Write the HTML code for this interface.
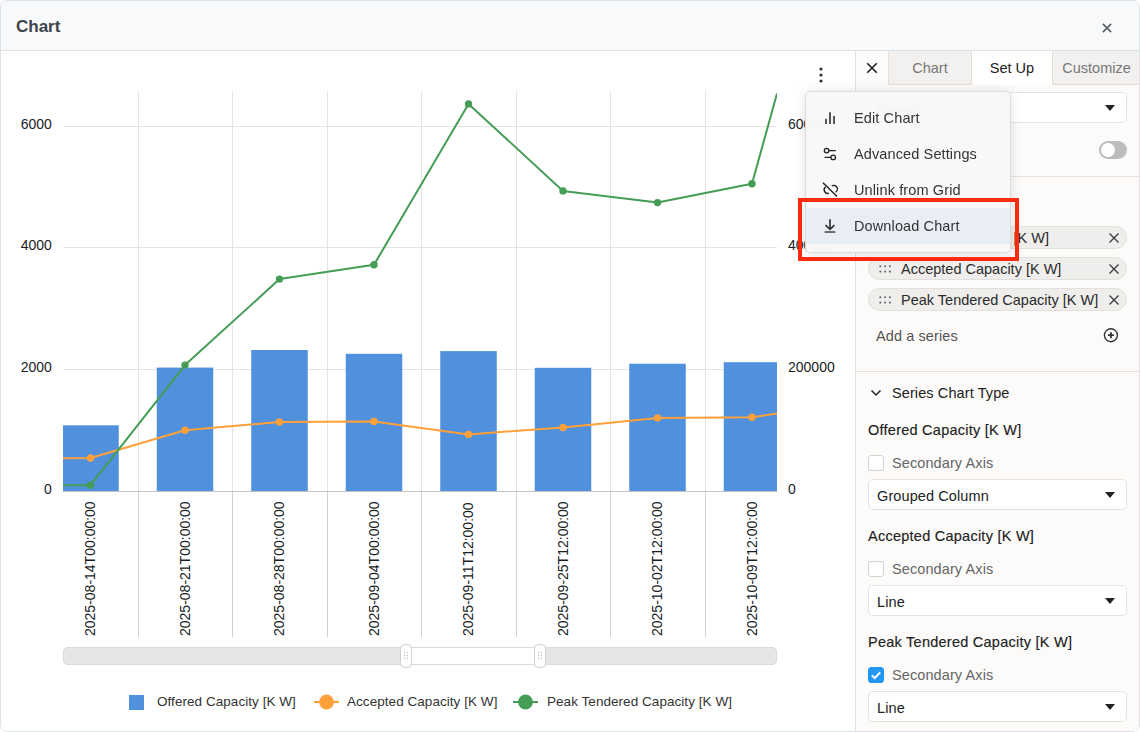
<!DOCTYPE html>
<html><head><meta charset="utf-8">
<style>
*{box-sizing:border-box;margin:0;padding:0}
html,body{width:1140px;height:732px;overflow:hidden;background:#fff;font-family:"Liberation Sans",sans-serif}
.win{position:absolute;left:0;top:0;width:1140px;height:732px;border-radius:7px;overflow:hidden;background:#fff}
.frame{position:absolute;left:0;top:0;width:1140px;height:732px;border:1px solid #dde1e5;border-radius:7px}
.hdr{position:absolute;left:0;top:0;width:1140px;height:51px;background:#f8f9fa;border-bottom:1px solid #dde1e5}
.title{position:absolute;left:16px;top:17px;font-size:17px;font-weight:bold;color:#3d434a;line-height:20px}
.abs{position:absolute}
.panel{position:absolute;left:855px;top:51px;width:285px;height:681px;background:#fcfbfa}
.t{position:absolute;font-size:14.5px;letter-spacing:0.1px;line-height:18px;white-space:nowrap;color:#222}
.tab{position:absolute;top:0;height:34px;border-bottom:1px solid #e4dcd5;font-size:14.5px;letter-spacing:0;line-height:34px;text-align:center;color:#777;background:#f2f1ef}
.chip{position:absolute;left:12px;width:259px;height:23px;border:1px solid #e2e0dd;border-radius:12px;background:#efeeec}
.sel{position:absolute;left:12px;width:259px;height:31px;border:1px solid #e6e2de;border-radius:5px;background:#fff}
.cb{position:absolute;left:12px;width:16px;height:16px;border:1px solid #d4d2cf;border-radius:3px;background:#fff}
.menu{position:absolute;left:805px;top:91px;width:206px;height:162px;background:rgba(248,248,248,0.965);backdrop-filter:blur(1.5px);border:1px solid #dcdcdc;border-radius:5px;box-shadow:0 1px 12px rgba(0,0,0,0.13)}
.mi{position:absolute;left:0;width:204px;height:36px}
.mt{position:absolute;left:48px;top:9px;font-size:14.5px;letter-spacing:0.12px;line-height:18px;color:#333;white-space:nowrap}
</style></head><body>
<div class="win">
<div class="hdr"><div class="title">Chart</div>
  <svg class="abs" style="left:1101px;top:22px" width="12" height="12" viewBox="0 0 12 12"><path d="M1.9 1.9L10.1 10.1M10.1 1.9L1.9 10.1" stroke="#5f666d" stroke-width="1.8"/></svg>
</div>
<svg class="abs" style="left:0;top:0" width="855" height="732" viewBox="0 0 855 732">
<defs><clipPath id="pc"><rect x="63" y="80" width="714" height="412"/></clipPath></defs>
<line x1="63" x2="777" y1="126.5" y2="126.5" stroke="#e4e4e4" stroke-width="1"/>
<line x1="63" x2="777" y1="247.5" y2="247.5" stroke="#e4e4e4" stroke-width="1"/>
<line x1="63" x2="777" y1="369.5" y2="369.5" stroke="#e4e4e4" stroke-width="1"/>
<line x1="138.5" x2="138.5" y1="91" y2="491" stroke="#e4e4e4" stroke-width="1"/>
<line x1="138.5" x2="138.5" y1="492" y2="637" stroke="#cfcfcf" stroke-width="1"/>
<line x1="232.5" x2="232.5" y1="91" y2="491" stroke="#e4e4e4" stroke-width="1"/>
<line x1="232.5" x2="232.5" y1="492" y2="637" stroke="#cfcfcf" stroke-width="1"/>
<line x1="327.5" x2="327.5" y1="91" y2="491" stroke="#e4e4e4" stroke-width="1"/>
<line x1="327.5" x2="327.5" y1="492" y2="637" stroke="#cfcfcf" stroke-width="1"/>
<line x1="421.5" x2="421.5" y1="91" y2="491" stroke="#e4e4e4" stroke-width="1"/>
<line x1="421.5" x2="421.5" y1="492" y2="637" stroke="#cfcfcf" stroke-width="1"/>
<line x1="516.5" x2="516.5" y1="91" y2="491" stroke="#e4e4e4" stroke-width="1"/>
<line x1="516.5" x2="516.5" y1="492" y2="637" stroke="#cfcfcf" stroke-width="1"/>
<line x1="610.5" x2="610.5" y1="91" y2="491" stroke="#e4e4e4" stroke-width="1"/>
<line x1="610.5" x2="610.5" y1="492" y2="637" stroke="#cfcfcf" stroke-width="1"/>
<line x1="705.5" x2="705.5" y1="91" y2="491" stroke="#e4e4e4" stroke-width="1"/>
<line x1="705.5" x2="705.5" y1="492" y2="637" stroke="#cfcfcf" stroke-width="1"/>
<g clip-path="url(#pc)">
<rect x="62.25" y="425.3" width="56.5" height="65.70" fill="#5090dc"/>
<rect x="156.75" y="367.6" width="56.5" height="123.40" fill="#5090dc"/>
<rect x="251.25" y="350.0" width="56.5" height="141.00" fill="#5090dc"/>
<rect x="345.75" y="353.8" width="56.5" height="137.20" fill="#5090dc"/>
<rect x="440.25" y="351.1" width="56.5" height="139.90" fill="#5090dc"/>
<rect x="534.75" y="367.8" width="56.5" height="123.20" fill="#5090dc"/>
<rect x="629.25" y="363.7" width="56.5" height="127.30" fill="#5090dc"/>
<rect x="723.75" y="362.2" width="56.5" height="128.80" fill="#5090dc"/>
</g>
<line x1="63" x2="777" y1="491.5" y2="491.5" stroke="#c3c3c3" stroke-width="1"/>
<g clip-path="url(#pc)">
<polyline points="63.00,458.30 90.50,458.00 185.00,430.20 279.50,421.90 374.00,421.40 468.50,434.40 563.00,427.50 657.50,417.90 752.00,417.20 777.00,413.50" fill="none" stroke="#ffa03a" stroke-width="2" stroke-linejoin="round"/><circle cx="90.50" cy="458.00" r="3.7" fill="#ffa03a"/><circle cx="185.00" cy="430.20" r="3.7" fill="#ffa03a"/><circle cx="279.50" cy="421.90" r="3.7" fill="#ffa03a"/><circle cx="374.00" cy="421.40" r="3.7" fill="#ffa03a"/><circle cx="468.50" cy="434.40" r="3.7" fill="#ffa03a"/><circle cx="563.00" cy="427.50" r="3.7" fill="#ffa03a"/><circle cx="657.50" cy="417.90" r="3.7" fill="#ffa03a"/><circle cx="752.00" cy="417.20" r="3.7" fill="#ffa03a"/>
<polyline points="63.00,485.20 90.50,485.20 185.00,365.10 279.50,279.10 374.00,264.80 468.50,103.90 563.00,190.90 657.50,202.60 752.00,183.80 777.00,93.40" fill="none" stroke="#459d55" stroke-width="2" stroke-linejoin="round"/><circle cx="90.50" cy="485.20" r="3.7" fill="#459d55"/><circle cx="185.00" cy="365.10" r="3.7" fill="#459d55"/><circle cx="279.50" cy="279.10" r="3.7" fill="#459d55"/><circle cx="374.00" cy="264.80" r="3.7" fill="#459d55"/><circle cx="468.50" cy="103.90" r="3.7" fill="#459d55"/><circle cx="563.00" cy="190.90" r="3.7" fill="#459d55"/><circle cx="657.50" cy="202.60" r="3.7" fill="#459d55"/><circle cx="752.00" cy="183.80" r="3.7" fill="#459d55"/>
</g>
<text x="51.8" y="129.3" text-anchor="end" font-family="Liberation Sans" font-size="14" fill="#181d1f">6000</text>
<text x="51.8" y="250.3" text-anchor="end" font-family="Liberation Sans" font-size="14" fill="#181d1f">4000</text>
<text x="51.8" y="372.3" text-anchor="end" font-family="Liberation Sans" font-size="14" fill="#181d1f">2000</text>
<text x="51.8" y="494.3" text-anchor="end" font-family="Liberation Sans" font-size="14" fill="#181d1f">0</text>
<text x="788" y="129.3" font-family="Liberation Sans" font-size="14" fill="#181d1f">600000</text>
<text x="788" y="250.3" font-family="Liberation Sans" font-size="14" fill="#181d1f">400000</text>
<text x="788" y="372.3" font-family="Liberation Sans" font-size="14" fill="#181d1f">200000</text>
<text x="788" y="494.3" font-family="Liberation Sans" font-size="14" fill="#181d1f">0</text>
<text transform="translate(95.10,636) rotate(-90)" font-family="Liberation Sans" font-size="14" letter-spacing="0" fill="#181d1f">2025-08-14T00:00:00</text>
<text transform="translate(189.60,636) rotate(-90)" font-family="Liberation Sans" font-size="14" letter-spacing="0" fill="#181d1f">2025-08-21T00:00:00</text>
<text transform="translate(284.10,636) rotate(-90)" font-family="Liberation Sans" font-size="14" letter-spacing="0" fill="#181d1f">2025-08-28T00:00:00</text>
<text transform="translate(378.60,636) rotate(-90)" font-family="Liberation Sans" font-size="14" letter-spacing="0" fill="#181d1f">2025-09-04T00:00:00</text>
<text transform="translate(473.10,636) rotate(-90)" font-family="Liberation Sans" font-size="14" letter-spacing="0" fill="#181d1f">2025-09-11T12:00:00</text>
<text transform="translate(567.60,636) rotate(-90)" font-family="Liberation Sans" font-size="14" letter-spacing="0" fill="#181d1f">2025-09-25T12:00:00</text>
<text transform="translate(662.10,636) rotate(-90)" font-family="Liberation Sans" font-size="14" letter-spacing="0" fill="#181d1f">2025-10-02T12:00:00</text>
<text transform="translate(756.60,636) rotate(-90)" font-family="Liberation Sans" font-size="14" letter-spacing="0" fill="#181d1f">2025-10-09T12:00:00</text>
<rect x="63.5" y="647.5" width="713" height="17" rx="4" fill="#e6e6e6" stroke="#d9d9d9" stroke-width="1"/>
<rect x="406" y="647.5" width="134" height="17" fill="#fff" stroke="#d9d9d9" stroke-width="1"/>
<rect x="400.5" y="644.5" width="11" height="23" rx="4" fill="#fff" stroke="#cfcfcf" stroke-width="1"/>
<circle cx="404.5" cy="652.5" r="0.7" fill="#bbb"/>
<circle cx="407.5" cy="652.5" r="0.7" fill="#bbb"/>
<circle cx="404.5" cy="655.5" r="0.7" fill="#bbb"/>
<circle cx="407.5" cy="655.5" r="0.7" fill="#bbb"/>
<circle cx="404.5" cy="658.5" r="0.7" fill="#bbb"/>
<circle cx="407.5" cy="658.5" r="0.7" fill="#bbb"/>
<rect x="534.5" y="644.5" width="11" height="23" rx="4" fill="#fff" stroke="#cfcfcf" stroke-width="1"/>
<circle cx="538.5" cy="652.5" r="0.7" fill="#bbb"/>
<circle cx="541.5" cy="652.5" r="0.7" fill="#bbb"/>
<circle cx="538.5" cy="655.5" r="0.7" fill="#bbb"/>
<circle cx="541.5" cy="655.5" r="0.7" fill="#bbb"/>
<circle cx="538.5" cy="658.5" r="0.7" fill="#bbb"/>
<circle cx="541.5" cy="658.5" r="0.7" fill="#bbb"/>
<rect x="129" y="695" width="15" height="15" fill="#5090dc"/>
<text x="157" y="705.5" font-family="Liberation Sans" font-size="13.5" letter-spacing="0.05" fill="#333">Offered Capacity [K W]</text>
<line x1="314" x2="339" y1="702" y2="702" stroke="#ffa03a" stroke-width="2"/><circle cx="326.5" cy="702" r="7.4" fill="#ffa03a"/>
<text x="347" y="705.5" font-family="Liberation Sans" font-size="13.5" letter-spacing="0.05" fill="#333">Accepted Capacity [K W]</text>
<line x1="513" x2="538" y1="702" y2="702" stroke="#459d55" stroke-width="2"/><circle cx="525.5" cy="702" r="7.4" fill="#459d55"/>
<text x="547" y="705.5" font-family="Liberation Sans" font-size="13.5" letter-spacing="0.05" fill="#333">Peak Tendered Capacity [K W]</text>
<circle cx="821" cy="69" r="1.6" fill="#333"/>
<circle cx="821" cy="75" r="1.6" fill="#333"/>
<circle cx="821" cy="81" r="1.6" fill="#333"/>
</svg>
<div class="panel">
<div class="abs" style="left:1px;top:0px;width:32px;height:34px;background:#fcfbfa"></div>
<svg class="abs" style="left:11px;top:11px" width="12" height="12" viewBox="0 0 12 12"><path d="M1.2 1.2L10.8 10.8M10.8 1.2L1.2 10.8" stroke="#222" stroke-width="1.6"/></svg>
<div class="tab" style="left:33px;top:0px;width:83px;border-left:1px solid #e6ddd5">Chart</div>
<div class="tab" style="left:116px;top:0px;width:81px;border-left:1px solid #e6ddd5;background:#fff;border-bottom-color:#fff;color:#222">Set Up</div>
<div class="tab" style="left:197px;top:0px;width:88px;border-left:1px solid #e6ddd5">Customize</div>
<div class="sel" style="left:13px;top:41px;width:259px;height:31px"></div><div class="t" style="left:22px;top:49px;color:#222">Group</div><svg class="abs" style="left:250px;top:54px" width="10" height="7" viewBox="0 0 10 7"><path d="M0 0H10L5 6Z" fill="#222"/></svg>
<div class="abs" style="left:244px;top:90px;width:28px;height:18px;border-radius:9px;background:#bcbcbc"></div>
<div class="abs" style="left:246px;top:92px;width:14px;height:14px;border-radius:7px;background:#fff"></div>
<div class="abs" style="left:1px;top:125px;width:284px;height:1px;background:#e6e0da"></div>
<div class="chip" style="left:13px;top:175px;width:259px;height:23px"></div>
<svg class="abs" style="left:24px;top:183px" width="13" height="9" viewBox="0 0 13 9"><circle cx="1.3" cy="1.3" r="1.05" fill="#6a6a6a"/><circle cx="1.3" cy="6.6" r="1.05" fill="#6a6a6a"/><circle cx="6.1" cy="1.3" r="1.05" fill="#6a6a6a"/><circle cx="6.1" cy="6.6" r="1.05" fill="#6a6a6a"/><circle cx="10.9" cy="1.3" r="1.05" fill="#6a6a6a"/><circle cx="10.9" cy="6.6" r="1.05" fill="#6a6a6a"/></svg>
<div class="t" style="left:46px;top:178px;color:#2b2b2b;letter-spacing:0">Offered Capacity [K W]</div>
<svg class="abs" style="left:253px;top:181px" width="12" height="12" viewBox="0 0 12 12"><path d="M1.5 1.5L10.5 10.5M10.5 1.5L1.5 10.5" stroke="#3a3a3a" stroke-width="1.3"/></svg>
<div class="chip" style="left:13px;top:206px;width:259px;height:23px"></div>
<svg class="abs" style="left:24px;top:214px" width="13" height="9" viewBox="0 0 13 9"><circle cx="1.3" cy="1.3" r="1.05" fill="#6a6a6a"/><circle cx="1.3" cy="6.6" r="1.05" fill="#6a6a6a"/><circle cx="6.1" cy="1.3" r="1.05" fill="#6a6a6a"/><circle cx="6.1" cy="6.6" r="1.05" fill="#6a6a6a"/><circle cx="10.9" cy="1.3" r="1.05" fill="#6a6a6a"/><circle cx="10.9" cy="6.6" r="1.05" fill="#6a6a6a"/></svg>
<div class="t" style="left:46px;top:209px;color:#2b2b2b;letter-spacing:0">Accepted Capacity [K W]</div>
<svg class="abs" style="left:253px;top:212px" width="12" height="12" viewBox="0 0 12 12"><path d="M1.5 1.5L10.5 10.5M10.5 1.5L1.5 10.5" stroke="#3a3a3a" stroke-width="1.3"/></svg>
<div class="chip" style="left:13px;top:237px;width:259px;height:23px"></div>
<svg class="abs" style="left:24px;top:245px" width="13" height="9" viewBox="0 0 13 9"><circle cx="1.3" cy="1.3" r="1.05" fill="#6a6a6a"/><circle cx="1.3" cy="6.6" r="1.05" fill="#6a6a6a"/><circle cx="6.1" cy="1.3" r="1.05" fill="#6a6a6a"/><circle cx="6.1" cy="6.6" r="1.05" fill="#6a6a6a"/><circle cx="10.9" cy="1.3" r="1.05" fill="#6a6a6a"/><circle cx="10.9" cy="6.6" r="1.05" fill="#6a6a6a"/></svg>
<div class="t" style="left:46px;top:240px;color:#2b2b2b;letter-spacing:0">Peak Tendered Capacity [K W]</div>
<svg class="abs" style="left:253px;top:243px" width="12" height="12" viewBox="0 0 12 12"><path d="M1.5 1.5L10.5 10.5M10.5 1.5L1.5 10.5" stroke="#3a3a3a" stroke-width="1.3"/></svg>
<div class="t" style="left:21px;top:276px;color:#555">Add a series</div>
<svg class="abs" style="left:247px;top:276px" width="18" height="18" viewBox="0 0 18 18"><circle cx="8.9" cy="8.2" r="6.5" fill="none" stroke="#333" stroke-width="1.35"/><path d="M8.9 5.2V11.2M5.9 8.2H11.9" stroke="#333" stroke-width="1.8"/></svg>
<div class="abs" style="left:1px;top:320px;width:284px;height:1px;background:#e6e0da"></div>
<svg class="abs" style="left:15px;top:338px" width="12" height="8" viewBox="0 0 12 8"><path d="M1.5 1.5L6 6L10.5 1.5" fill="none" stroke="#222" stroke-width="1.5"/></svg>
<div class="t" style="left:37px;top:333px;color:#222">Series Chart Type</div>
<div class="t" style="left:13px;top:370px;color:#222;letter-spacing:0.25px;-webkit-text-stroke:0.15px #222">Offered Capacity [K W]</div><div class="cb" style="left:13px;top:404px"></div><div class="t" style="left:37px;top:403px;color:#666">Secondary Axis</div><div class="sel" style="left:13px;top:428px;width:259px;height:31px"></div><div class="t" style="left:22px;top:436px;color:#222">Grouped Column</div><svg class="abs" style="left:250px;top:441px" width="10" height="7" viewBox="0 0 10 7"><path d="M0 0H10L5 6Z" fill="#222"/></svg>
<div class="t" style="left:13px;top:476px;color:#222;letter-spacing:0.25px;-webkit-text-stroke:0.15px #222">Accepted Capacity [K W]</div><div class="cb" style="left:13px;top:510px"></div><div class="t" style="left:37px;top:509px;color:#666">Secondary Axis</div><div class="sel" style="left:13px;top:534px;width:259px;height:31px"></div><div class="t" style="left:22px;top:542px;color:#222">Line</div><svg class="abs" style="left:250px;top:547px" width="10" height="7" viewBox="0 0 10 7"><path d="M0 0H10L5 6Z" fill="#222"/></svg>
<div class="t" style="left:13px;top:582px;color:#222;letter-spacing:0.25px;-webkit-text-stroke:0.15px #222">Peak Tendered Capacity [K W]</div><div class="cb" style="left:13px;top:616px;background:#2196f3;border-color:#2196f3"></div><svg class="abs" style="left:13px;top:616px" width="16" height="16" viewBox="0 0 16 16"><path d="M3.8 8.3L6.7 11.1L12.2 5.3" fill="none" stroke="#fff" stroke-width="2"/></svg><div class="t" style="left:37px;top:615px;color:#666">Secondary Axis</div><div class="sel" style="left:13px;top:640px;width:259px;height:31px"></div><div class="t" style="left:22px;top:648px;color:#222">Line</div><svg class="abs" style="left:250px;top:653px" width="10" height="7" viewBox="0 0 10 7"><path d="M0 0H10L5 6Z" fill="#222"/></svg>
<div class="abs" style="left:0;top:0;width:1px;height:681px;background:#e4dfda"></div>
</div>
<div class="menu">
<div class="mi" style="top:8px;"><svg class="abs" style="left:0;top:0" width="48" height="36" viewBox="0 0 48 36"><path d="M20 24V18.7M24 24V12.2M28 24V16.1" stroke="#555" stroke-width="2" fill="none"/></svg><div class="mt">Edit Chart</div></div>
<div class="mi" style="top:44px;"><svg class="abs" style="left:0;top:0" width="48" height="36" viewBox="0 0 48 36"><path d="M22.9 14.6H29.8M18.5 21.4H24.9" stroke="#222" stroke-width="1.3" fill="none"/><circle cx="20.6" cy="14.6" r="2.3" fill="none" stroke="#222" stroke-width="1.3"/><circle cx="27.2" cy="21.4" r="2.3" fill="none" stroke="#222" stroke-width="1.3"/></svg><div class="mt">Advanced Settings</div></div>
<div class="mi" style="top:80px;"><svg class="abs" style="left:0;top:0" width="48" height="36" viewBox="0 0 48 36"><path d="M17 10.8L31.1 24.5" stroke="#222" stroke-width="1.4" fill="none"/><path d="M19.6 14.8A3.7 3.7 0 0 0 22.8 21.3" stroke="#222" stroke-width="1.4" fill="none"/><path d="M25.8 13.9A3.6 3.6 0 0 1 29.6 20.2" stroke="#222" stroke-width="1.4" fill="none"/></svg><div class="mt">Unlink from Grid</div></div>
<div class="mi" style="top:116px;background:#e9eef6;"><svg class="abs" style="left:0;top:0" width="48" height="36" viewBox="0 0 48 36"><path d="M24 11.2V21M19.5 17.1L24 21.4L28.4 17.1" stroke="#333" stroke-width="1.7" fill="none"/><path d="M18.6 24H29.3" stroke="#555" stroke-width="1.7"/></svg><div class="mt">Download Chart</div></div>
</div>
<div class="abs" style="left:798px;top:198px;width:221px;height:63px;border:4px solid #fe2a10"></div>
<div class="frame"></div>
</div>
</body></html>
